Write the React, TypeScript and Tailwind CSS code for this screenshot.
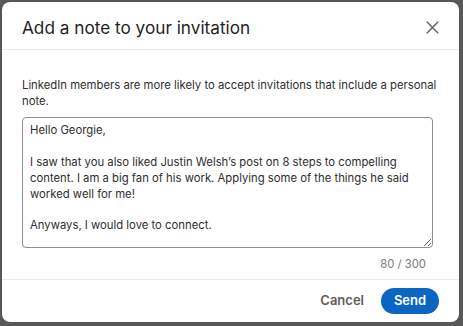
import React from "react";

const text = `Hello Georgie,

I saw that you also liked Justin Welsh’s post on 8 steps to compelling content. I am a big fan of his work. Applying some of the things he said worked well for me!

Anyways, I would love to connect.`;

const font = { fontFamily: "Inter, 'Noto Sans', sans-serif" };

export default function App() {
  return (
    <div className="w-[463px] h-[326px] bg-[#585858] pl-[2px] pt-[2px] overflow-hidden" style={font}>
      <div className="w-[457px] h-[320px] bg-white rounded-[8px] flex flex-col">
        <div className="h-[48px] shrink-0 flex items-center justify-between pl-[20px] pr-[20px] pt-[4px] border-b border-[#ebebeb]">
          <h2 className="text-[17.2px] text-[#1f1f1f]">Add a note to your invitation</h2>
          <svg width="13" height="13" viewBox="0 0 13 13" className="text-[#666]">
            <path d="M0.8 0.8 L12.2 12.2 M12.2 0.8 L0.8 12.2" stroke="currentColor" strokeWidth="1.5" fill="none" />
          </svg>
        </div>
        <div className="px-[20px] pt-[27px] flex flex-col">
          <p className="text-[11.3px] leading-[16px] text-[#2e2e2e] -mr-[6px]">
            LinkedIn members are more likely to accept invitations that include a personal note.
          </p>
          <textarea
            readOnly
            value={text}
            className="mt-[8px] w-[411px] h-[131px] border border-[#8f8f8f] rounded-[4px] px-[7px] pt-[5px] pb-[4px] text-[11.3px] leading-[15.9px] text-[#2e2e2e] resize-y outline-none"
            style={font}
          />
          <div className="text-right pr-[13px] mt-[8px] text-[11.3px] text-[#7a7a7a] leading-[16px]">80 / 300</div>
        </div>
        <div className="mt-[7px] border-t border-[#ebebeb] flex-1 flex items-center justify-end gap-[17px] pr-[20px]">
          <button className="text-[13px] font-semibold text-[#5e5e5e]">Cancel</button>
          <button className="h-[26px] w-[58px] rounded-full bg-[#0a66c2] text-white text-[13px] font-semibold">Send</button>
        </div>
      </div>
    </div>
  );
}
